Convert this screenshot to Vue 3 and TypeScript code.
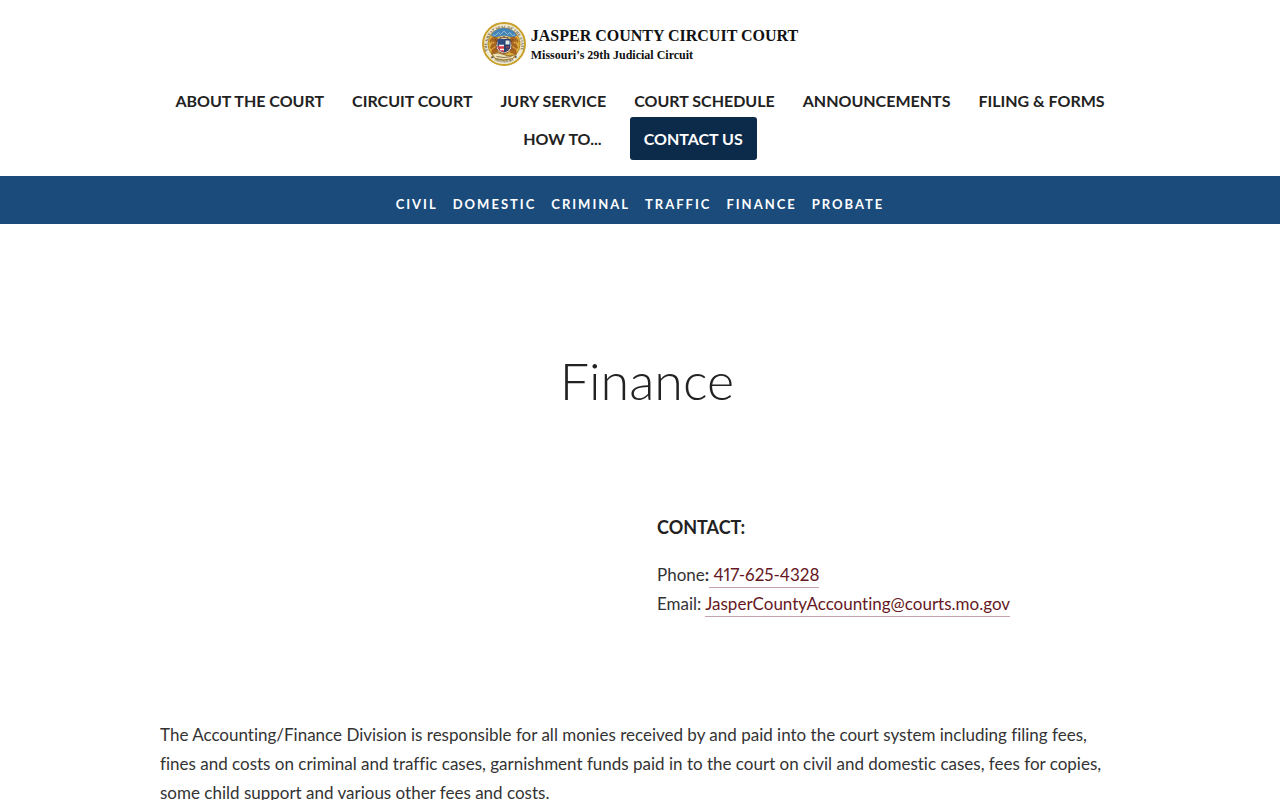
<script setup lang="ts">
interface NavItem {
  label: string
  href: string
  button?: boolean
}

const mainNav: NavItem[] = [
  { label: 'ABOUT THE COURT', href: '#about' },
  { label: 'CIRCUIT COURT', href: '#circuit' },
  { label: 'JURY SERVICE', href: '#jury' },
  { label: 'COURT SCHEDULE', href: '#schedule' },
  { label: 'ANNOUNCEMENTS', href: '#announcements' },
  { label: 'FILING & FORMS', href: '#forms' },
  { label: 'HOW TO...', href: '#how-to' },
  { label: 'CONTACT US', href: '#contact', button: true },
]

const divisions: string[] = ['CIVIL', 'DOMESTIC', 'CRIMINAL', 'TRAFFIC', 'FINANCE', 'PROBATE']
</script>

<template>
  <div class="page">
    <header class="header">
      <a class="brand" href="#home">
        <svg class="seal" viewBox="0 0 88 88" role="img" aria-label="State seal">
          <defs>
            <path id="seal-top" d="M12 58a34 34 0 1 1 64 0" />
            <path id="seal-bottom" d="M10 59a37 37 0 0 0 68 0" />
          </defs>
          <circle cx="44" cy="44" r="42" fill="#f1ead2" stroke="#c9a02c" stroke-width="4" />
          <text class="seal-text"><textPath href="#seal-top">THE GREAT SEAL OF THE STATE</textPath></text>
          <text class="seal-text"><textPath href="#seal-bottom" startOffset="50%" text-anchor="middle">★ MISSOURI ★</textPath></text>
          <circle cx="44" cy="44" r="32" fill="#dcae3c" stroke="#b88d25" stroke-width="2" />
          <path d="M18 27c9-20 43-20 52 0l-9 5c-9-6-25-6-34 0z" fill="#4584b6" />
          <path d="M22 26l6 1 4-6 5 4 7-7 7 7 5-4 4 6 6-1" fill="none" stroke="#8ebbd3" stroke-width="2" />
          <path d="M32 34c4-9 20-9 24 0l-4 5H36z" fill="#d6cba6" />
          <path d="M35 32h5m2-2h4m2 2h5" stroke="#665f45" stroke-width="3" />
          <path d="M32 32c-7-6-16-1-17 8l5 3-4 8 4 4-2 10 13-3 4-20z" fill="#a8651f" />
          <path d="M56 32c7-6 16-1 17 8l-5 3 4 8-4 4 2 10-13-3-4-20z" fill="#a8651f" />
          <path d="M18 40l7 2m-5 12 9-6M70 40l-7 2m5 12-9-6" stroke="#d59a3c" stroke-width="3" />
          <path d="M26 34l5 8-3 14M62 34l-5 8 3 14" fill="none" stroke="#744019" stroke-width="2" />
          <circle cx="44" cy="47" r="16" fill="#eee4d3" stroke="#86502b" stroke-width="2" />
          <path d="M44 34v27c-9-2-13-7-13-14V34z" fill="#304d82" />
          <path d="M44 34h13v13c0 7-4 12-13 14z" fill="#29436e" />
          <path d="M31 48h13v12c-8-1-12-6-13-12z" fill="#d73947" />
          <path d="M34 47h10m-8 8h8" stroke="#fff2f0" stroke-width="3" />
          <path d="M47 37h8v8h-8z" fill="#e1e8ea" />
          <path d="M48 50h6m-4 5h3" stroke="#9a4552" stroke-width="3" />
          <path d="M20 64q12-5 24 1t24-1l-6 9q-18 6-36 0z" fill="#eee1b4" stroke="#98702a" stroke-width="2" />
          <path d="M29 69q15 4 30 0" fill="none" stroke="#8a7850" stroke-width="2" />
        </svg>
        <span class="brand-text">
          <span class="brand-name">JASPER COUNTY CIRCUIT COURT</span>
          <span class="brand-circuit">Missouri’s 29th Judicial Circuit</span>
        </span>
      </a>
      <nav class="main-nav" aria-label="Main">
        <a v-for="item in mainNav" :key="item.label" :href="item.href" :class="{ button: item.button }">{{ item.label }}</a>
      </nav>
    </header>

    <nav class="division-nav" aria-label="Divisions">
      <a v-for="division in divisions" :key="division" :href="`#${division.toLowerCase()}`">{{ division }}</a>
    </nav>

    <main class="content">
      <h1>Finance</h1>
      <section class="contact">
        <h2>CONTACT:</h2>
        <p>
          Phone<strong>:</strong><a href="tel:4176254328">&nbsp;417-625-4328</a><br />
          Email: <a href="mailto:JasperCountyAccounting@courts.mo.gov">JasperCountyAccounting@courts.mo.gov</a>
        </p>
      </section>
      <p class="description">
        The Accounting/Finance Division is responsible for all monies received by and paid into the court system including filing fees, fines and costs on criminal and traffic cases, garnishment funds paid in to the court on civil and domestic cases, fees for copies, some child support and various other fees and costs.
      </p>
    </main>
  </div>
</template>

<style>
body {
  margin: 0;
  background: #fff;
}
html {
  scrollbar-width: none;
}
</style>

<style scoped>
.page {
  color: #222;
  font-family: Lato, 'Open Sans', sans-serif;
  font-size: 17px;
  line-height: 29px;
  font-variant-ligatures: none;
  font-variant-numeric: proportional-nums;
}
.header {
  padding: 22px 16px 18px;
}
.brand {
  display: flex;
  justify-content: center;
  align-items: center;
  gap: 5px;
  color: #111;
  text-decoration: none;
}
.seal {
  width: 44px;
  height: 44px;
}
.seal-text {
  fill: #5e5638;
  font: bold 8px 'Liberation Serif', serif;
}
.brand-text {
  display: flex;
  flex-direction: column;
  padding-top: 2px;
  font-family: 'Liberation Serif', serif;
  font-weight: 700;
  white-space: nowrap;
}
.brand-name {
  font-size: 16px;
  line-height: 20px;
}
.brand-circuit {
  font-size: 12px;
  line-height: 18px;
}
.main-nav {
  display: flex;
  flex-wrap: wrap;
  justify-content: center;
  max-width: 980px;
  margin: 16px auto 0;
}
.main-nav a {
  padding: 0 14px;
  color: #222;
  font-size: 16px;
  font-weight: 700;
  line-height: 38px;
  text-decoration: none;
  white-space: nowrap;
}
.main-nav .button {
  margin: -3px 14px -2px;
  padding: 12px 14px;
  border-radius: 3px;
  background: #0c2a49;
  color: #fff;
  line-height: 19px;
}
.division-nav {
  display: flex;
  justify-content: center;
  flex-wrap: wrap;
  gap: 0 15px;
  padding: 14px 16px 5px;
  background: #1b4b7b;
}
.division-nav a {
  color: #fff;
  font-size: 13px;
  font-weight: 700;
  letter-spacing: 2px;
  text-decoration: none;
}
.content {
  max-width: 960px;
  margin: 0 auto;
  padding: 125px 16px 0;
}
h1 {
  margin: 0;
  padding-left: 14px;
  font-size: 52px;
  font-weight: 300;
  line-height: 62px;
  text-align: center;
}
.contact {
  margin-left: calc(50% + 17px);
  padding-top: 102px;
}
h2 {
  margin: 0 0 18px;
  font-size: 18px;
  font-weight: 700;
  line-height: 29px;
}
p {
  margin: 0;
  color: #333;
}
.contact a {
  padding-bottom: 2px;
  border-bottom: 1px solid #c4a3ab;
  color: #661824;
  text-decoration: none;
}
.description {
  padding-top: 102px;
}
</style>
